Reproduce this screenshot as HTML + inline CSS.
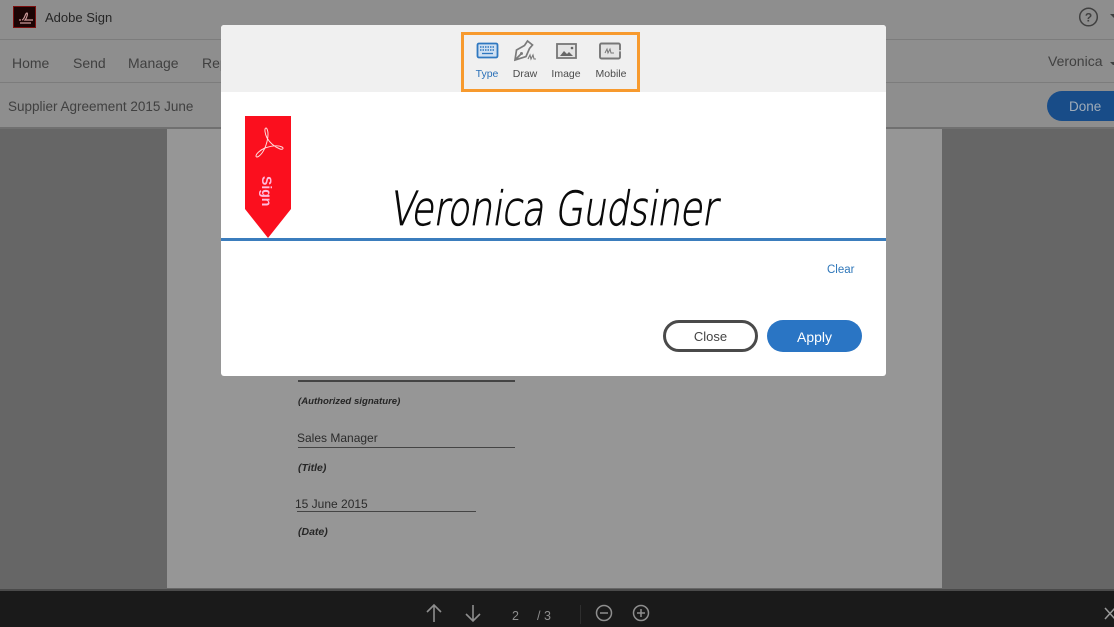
<!DOCTYPE html>
<html>
<head>
<meta charset="utf-8">
<style>
html,body{margin:0;padding:0;width:1114px;height:627px;overflow:hidden;background:#666;font-family:"Liberation Sans",sans-serif}
.a{position:absolute;white-space:nowrap}
.g{color:#404040;font-size:14px;line-height:18px}
.i{color:#262626;font-size:10.5px;font-style:italic;font-weight:bold;line-height:14px}
.d{color:#2b2b2b;font-size:12px;line-height:15px}
.l{background:#444;height:1px}
.t{font-size:10.5px;line-height:13px;color:#4b4b4b;text-align:center}
</style>
</head>
<body>
<div class="a" style="left:0;top:0;width:1114px;height:127px;background:#8e8e8e"></div>
<div class="a" style="left:0;top:39px;width:1114px;height:1px;background:#7c7c7c"></div>
<div class="a" style="left:0;top:82px;width:1114px;height:1px;background:#7c7c7c"></div>
<div class="a" style="left:0;top:127px;width:1114px;height:2px;background:#707070"></div>
<div class="a" style="left:13px;top:6px;width:23px;height:22px;background:#1c0505;border:1px solid #7c1010;box-sizing:border-box"></div>
<svg class="a" style="left:13px;top:6px" width="23" height="22"><path d="M6 14h2M9 14c3-1 3-7 5-7 1 0 0 5-2 7h8M7 17h11" stroke="#c99" stroke-width="1.2" fill="none"/></svg>
<div class="a" style="left:45px;top:9px;color:#262626;font-size:13px;line-height:18px">Adobe Sign</div>
<div class="a g" style="left:12px;top:54px">Home</div>
<div class="a g" style="left:73px;top:54px">Send</div>
<div class="a g" style="left:128px;top:54px">Manage</div>
<div class="a g" style="left:202px;top:54px">Reports</div>
<div class="a g" style="left:8px;top:98px;font-size:13.5px">Supplier Agreement 2015 June</div>
<div class="a g" style="left:1048px;top:52px">Veronica</div>
<svg class="a" style="left:1078px;top:6px" width="36" height="70">
<circle cx="10.500" cy="11" r="8.800" fill="none" stroke="#404040" stroke-width="1.500"/>
<text x="10.500" y="15.500" text-anchor="middle" font-size="12" font-weight="bold" font-family="Liberation Sans" fill="#404040">?</text>
<path d="M32 8h4v4zM32 56h4v3h-1z" fill="#404040"/>
</svg>
<div class="a" style="left:1047px;top:91px;width:90px;height:30px;border-radius:15px;background:#184c88;color:#a0acb8;font-size:13.5px;line-height:31px;padding-left:22px;box-sizing:border-box">Done</div>

<div class="a" style="left:167px;top:129px;width:775px;height:459px;background:#969696"></div>
<div class="a" style="left:0;top:589px;width:1114px;height:38px;background:#1a1a1a;border-top:2px solid #4a4a4a;box-sizing:border-box"></div>

<div class="a l" style="left:298px;top:380px;width:217px;height:2px"></div>
<div class="a i" style="left:298px;top:395px;font-size:9.6px">(Authorized signature)</div>
<div class="a d" style="left:297px;top:431px">Sales Manager</div>
<div class="a l" style="left:298px;top:447px;width:217px"></div>
<div class="a i" style="left:298px;top:461px">(Title)</div>
<div class="a d" style="left:295px;top:497px">15 June 2015</div>
<div class="a l" style="left:297px;top:511px;width:179px"></div>
<div class="a i" style="left:298px;top:525px">(Date)</div>

<svg class="a" style="left:420px;top:600px" width="240" height="27">
<path d="M14 22V6M7 12l7-7 7 7M53 5v16M46 14l7 7 7-7" stroke="#8e8e8e" stroke-width="1.600" fill="none"/>
<circle cx="184" cy="13" r="7.500" fill="none" stroke="#8e8e8e" stroke-width="1.500"/>
<path d="M180 13h8" stroke="#8e8e8e" stroke-width="1.500"/>
<circle cx="221" cy="13" r="7.500" fill="none" stroke="#8e8e8e" stroke-width="1.500"/>
<path d="M217 13h8M221 9v8" stroke="#8e8e8e" stroke-width="1.500"/>
<path d="M160.500 5v19" stroke="#2e2e2e"/>
</svg>
<div class="a" style="left:512px;top:609px;color:#8e8e8e;font-size:12.5px;line-height:15px">2</div>
<div class="a" style="left:537px;top:609px;color:#8e8e8e;font-size:12.5px;line-height:15px">/ 3</div>
<svg class="a" style="left:1104px;top:607px" width="10" height="14"><path d="M1 1l10 11M11 1L1 12" stroke="#999" stroke-width="1.500"/></svg>

<div class="a" style="left:221px;top:25px;width:665px;height:351px;background:#fff;border-radius:3px;overflow:hidden">
  <div class="a" style="left:0;top:0;width:665px;height:67px;background:#f0f0f0"></div>
</div>
<div class="a" style="left:461px;top:32px;width:179px;height:60px;border:3px solid #f79a2e;box-sizing:border-box"></div>

<svg class="a" style="left:470px;top:38px" width="165" height="28">
<rect x="7.500" y="5.500" width="20" height="14" rx="1.500" fill="#cfe0f2" stroke="#2f78c0" stroke-width="1.800"/>
<path d="M10 9h15M10 12h15" stroke="#2f78c0" stroke-width="1.500" stroke-dasharray="1.500 1"/>
<path d="M12 15.500h11" stroke="#2f78c0" stroke-width="1.300"/>
<path d="M45 22l1.500-10 8-4.500 3-4.500 5 4-3 3.500-3.500 8zM45 22l6-6" fill="none" stroke="#7a7a7a" stroke-width="1.700"/>
<circle cx="51.500" cy="15.500" r="1.500" fill="#7a7a7a"/>
<path d="M58 21l2-4 1 4 2-4 1 4h2" fill="none" stroke="#7a7a7a" stroke-width="1.100"/>
<rect x="87" y="6" width="19" height="14" fill="#e4e4e4" stroke="#777" stroke-width="1.800"/>
<path d="M90 18l4-5 3 3 2-2 4 4z" fill="#666"/><circle cx="102" cy="10" r="1.300" fill="#666"/>
<rect x="130" y="5.500" width="20" height="15" rx="1.500" fill="#e4e4e4" stroke="#777" stroke-width="1.900"/>
<path d="M135 15l2-4 1 4 2-4 1 4h3" fill="none" stroke="#777"/>
<rect x="149.300" y="12" width="1.400" height="1.500" fill="#eee"/>
</svg>
<div class="a t" style="left:467px;top:68px;width:40px;color:#2a70b8">Type</div>
<div class="a t" style="left:505px;top:68px;width:40px">Draw</div>
<div class="a t" style="left:546px;top:68px;width:40px">Image</div>
<div class="a t" style="left:591px;top:68px;width:40px">Mobile</div>

<svg class="a" style="left:245px;top:116px" width="46" height="123">
<path d="M0 0H46V93L23 122 0 93Z" fill="#fb0f1e"/>
<path d="M21 12c-2 0 -1 6 1 10 3 5 8 9 13 11 3 1 4-1 2-2-4-2-11-1-17 1-5 2-9 6-9 8 0 2 3 1 6-3 3-4 6-12 6-19 0-3-1-6-2-6z" fill="none" stroke="#fdd" stroke-width="1"/>
<text transform="translate(17 60) rotate(90)" font-size="14" font-family="Liberation Sans" font-weight="bold" fill="#fbd">Sign</text>
</svg>

<svg class="a" style="left:380px;top:170px" width="360" height="70">
<text transform="translate(9 55) skewX(-9) scale(.78 1)" font-family="DejaVu Sans" font-size="47" font-weight="200" fill="#0a0a0a" stroke="#0a0a0a" stroke-width=".8" textLength="420" lengthAdjust="spacing">Veronica Gudsiner</text>
</svg>
<div class="a" style="left:221px;top:238px;width:665px;height:3px;background:#3b7dbd"></div>

<div class="a" style="left:827px;top:263px;color:#2f77ba;font-size:11.5px;line-height:14px">Clear</div>
<div class="a" style="left:663px;top:320px;width:95px;height:32px;border:3px solid #4a4a4a;border-radius:16px;box-sizing:border-box;text-align:center;color:#444;font-size:13px;line-height:28px;background:#fff">Close</div>
<div class="a" style="left:767px;top:320px;width:95px;height:32px;border-radius:16px;background:#2a75c4;color:#fff;text-align:center;font-size:14px;line-height:34px">Apply</div>
</body>
</html>
